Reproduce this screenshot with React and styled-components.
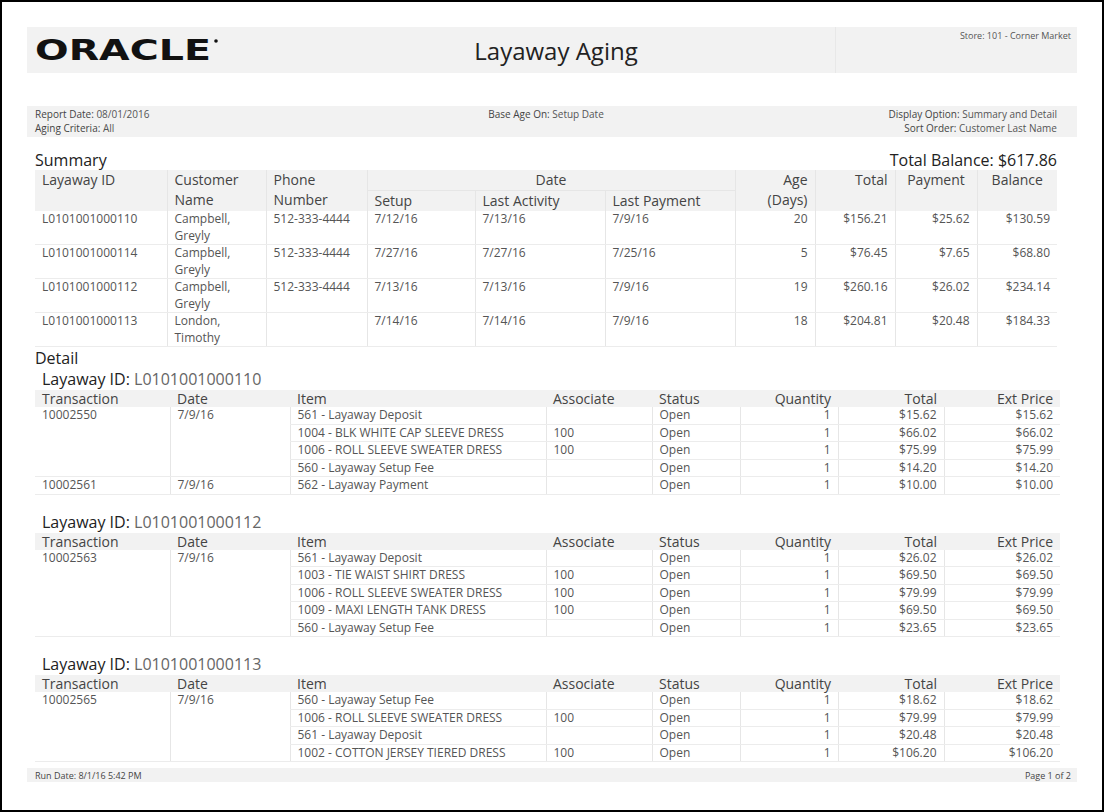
import React from "react";
import styled, { createGlobalStyle } from "styled-components";

const Global = createGlobalStyle`
  html, body { margin: 0; background: #fff; }
  body { font-family: "Open Sans", "Liberation Sans", sans-serif; color: #555; }
`;

const Frame = styled.div`
  width: 1104px;
  height: 812px;
  box-sizing: border-box;
  border: 2px solid #000;
  overflow: hidden;
  padding: 25px 25px 0 25px;
`;

const HeaderBand = styled.div`
  display: grid;
  grid-template-columns: 240px 1fr 242px;
  background: #f2f2f2;
  height: 46px;
`;

const Logo = styled.div`
  display: flex;
  align-items: center;
  padding-left: 8px;
`;

const Title = styled.div`
  display: flex;
  align-items: center;
  justify-content: center;
  font-size: 24px;
  color: #222;
  padding-left: 10px;
`;

const Store = styled.div`
  border-left: 1px solid #e8e8e8;
  font-size: 9px;
  text-align: right;
  padding: 2px 6px 0 0;
`;

const MetaBand = styled.div`
  margin-top: 33px;
  background: #f2f2f2;
  height: 30px;
  display: grid;
  grid-template-columns: 1fr 1fr 1fr;
  font-size: 10px;
  line-height: 14px;
  padding-top: 1px;
`;

const MetaCol = styled.div`
  padding: 0 20px 0 8px;
  text-align: ${(p) => p.$align || "left"};
`;

const Label = styled.span`
  color: #444;
`;

const SectionRow = styled.div`
  display: flex;
  justify-content: space-between;
  align-items: flex-end;
  padding: 0 20px 0 8px;
  margin-top: ${(p) => p.$mt || 0}px;
  font-size: 16px;
  color: #222;
  line-height: 20px;
`;

const Table = styled.table`
  border-collapse: collapse;
  table-layout: fixed;
  margin-left: 8px;
  width: ${(p) => p.$w}px;
  font-size: 12px;
`;

const Th = styled.th`
  background: #f2f2f2;
  font-weight: normal;
  font-size: 14px;
  color: #444;
  text-align: ${(p) => p.$align || "left"};
  vertical-align: top;
  padding: 0 7px;
  line-height: ${(p) => (p.$compact ? "17px" : "20px")};
  border-left: ${(p) => (p.$bl ? "1px solid #e6e6e6" : "none")};
  border-bottom: ${(p) => (p.$bb ? "1px solid #e6e6e6" : "none")};
`;

const Td = styled.td`
  text-align: ${(p) => p.$align || "left"};
  vertical-align: top;
  padding: 0 7px;
  line-height: ${(p) => (p.$tall ? "16.5px" : "16.5px")};
  height: ${(p) => (p.$tall ? "33px" : "16.5px")};
  box-sizing: border-box;
  border-left: ${(p) => (p.$bl ? "1px solid #e6e6e6" : "none")};
  border-bottom: 1px solid #ececec;
  white-space: nowrap;
  overflow: hidden;
`;

const LayawayHead = styled.div`
  font-size: 16px;
  color: #222;
  margin: ${(p) => p.$mt}px 0 2px 15px;
  line-height: 18px;
  span { color: #666; }
`;

const Footer = styled.div`
  margin-top: 6px;
  background: #f2f2f2;
  height: 14px;
  display: flex;
  justify-content: space-between;
  align-items: center;
  font-size: 9px;
  padding: 0 6px 0 8px;
  color: #444;
`;

const summary = [
  ["L0101001000110", "Campbell,", "Greyly", "512-333-4444", "7/12/16", "7/13/16", "7/9/16", "20", "$156.21", "$25.62", "$130.59"],
  ["L0101001000114", "Campbell,", "Greyly", "512-333-4444", "7/27/16", "7/27/16", "7/25/16", "5", "$76.45", "$7.65", "$68.80"],
  ["L0101001000112", "Campbell,", "Greyly", "512-333-4444", "7/13/16", "7/13/16", "7/9/16", "19", "$260.16", "$26.02", "$234.14"],
  ["L0101001000113", "London,", "Timothy", "", "7/14/16", "7/14/16", "7/9/16", "18", "$204.81", "$20.48", "$184.33"],
];

const details = [
  {
    id: "L0101001000110",
    mt: 2,
    tx: [
      ["10002550", "7/9/16", [
        ["561 - Layaway Deposit", "", "$15.62"],
        ["1004 - BLK WHITE CAP SLEEVE DRESS", "100", "$66.02"],
        ["1006 - ROLL SLEEVE SWEATER DRESS", "100", "$75.99"],
        ["560 - Layaway Setup Fee", "", "$14.20"],
      ]],
      ["10002561", "7/9/16", [["562 - Layaway Payment", "", "$10.00"]]],
    ],
  },
  {
    id: "L0101001000112",
    mt: 18,
    tx: [
      ["10002563", "7/9/16", [
        ["561 - Layaway Deposit", "", "$26.02"],
        ["1003 - TIE WAIST SHIRT DRESS", "100", "$69.50"],
        ["1006 - ROLL SLEEVE SWEATER DRESS", "100", "$79.99"],
        ["1009 - MAXI LENGTH TANK DRESS", "100", "$69.50"],
        ["560 - Layaway Setup Fee", "", "$23.65"],
      ]],
    ],
  },
  {
    id: "L0101001000113",
    mt: 18,
    tx: [
      ["10002565", "7/9/16", [
        ["560 - Layaway Setup Fee", "", "$18.62"],
        ["1006 - ROLL SLEEVE SWEATER DRESS", "100", "$79.99"],
        ["561 - Layaway Deposit", "", "$20.48"],
        ["1002 - COTTON JERSEY TIERED DRESS", "100", "$106.20"],
      ]],
    ],
  },
];

function OracleLogo() {
  return (
    <svg width="186" height="28" viewBox="0 0 186 28">
      <text
        x="0"
        y="24"
        fontFamily="'DejaVu Sans', 'Liberation Sans', sans-serif"
        fontSize="29"
        fontWeight="bold"
        fill="#111"
        textLength="176"
        lengthAdjust="spacingAndGlyphs"
      >
        ORACLE
      </text>
      <circle cx="181" cy="5" r="1.8" fill="#111" />
    </svg>
  );
}

function SummaryTable() {
  return (
    <Table $w={1022}>
      <colgroup>
        <col width="132" /><col width="99" /><col width="101" /><col width="108" />
        <col width="130" /><col width="130" /><col width="80" /><col width="80" />
        <col width="82" /><col width="80" />
      </colgroup>
      <thead>
        <tr>
          <Th rowSpan={2}>Layaway ID</Th>
          <Th rowSpan={2} $bl>Customer<br />Name</Th>
          <Th rowSpan={2} $bl>Phone<br />Number</Th>
          <Th colSpan={3} $bl $bb $align="center">Date</Th>
          <Th rowSpan={2} $bl $align="right">Age<br />(Days)</Th>
          <Th rowSpan={2} $bl $align="right">Total</Th>
          <Th rowSpan={2} $bl $align="center">Payment</Th>
          <Th rowSpan={2} $bl $align="center">Balance</Th>
        </tr>
        <tr>
          <Th $bl>Setup</Th>
          <Th $bl>Last Activity</Th>
          <Th $bl>Last Payment</Th>
        </tr>
      </thead>
      <tbody>
        {summary.map((r) => (
          <tr key={r[0]}>
            <Td $tall>{r[0]}</Td>
            <Td $tall $bl>{r[1]}<br />{r[2]}</Td>
            <Td $tall $bl>{r[3]}</Td>
            <Td $tall $bl>{r[4]}</Td>
            <Td $tall $bl>{r[5]}</Td>
            <Td $tall $bl>{r[6]}</Td>
            <Td $tall $bl $align="right">{r[7]}</Td>
            <Td $tall $bl $align="right">{r[8]}</Td>
            <Td $tall $bl $align="right">{r[9]}</Td>
            <Td $tall $bl $align="right">{r[10]}</Td>
          </tr>
        ))}
      </tbody>
    </Table>
  );
}

function DetailTable({ tx }) {
  return (
    <Table $w={1025}>
      <colgroup>
        <col width="135" /><col width="120" /><col width="256" /><col width="106" />
        <col width="88" /><col width="98" /><col width="106" /><col width="116" />
      </colgroup>
      <thead>
        <tr>
          <Th $compact>Transaction</Th>
          <Th $compact>Date</Th>
          <Th $compact>Item</Th>
          <Th $compact>Associate</Th>
          <Th $compact>Status</Th>
          <Th $compact $align="right">Quantity</Th>
          <Th $compact $align="right">Total</Th>
          <Th $compact $align="right">Ext Price</Th>
        </tr>
      </thead>
      <tbody>
        {tx.map(([num, date, items]) =>
          items.map((it, i) => (
            <tr key={num + i}>
              {i === 0 && <Td rowSpan={items.length}>{num}</Td>}
              {i === 0 && <Td rowSpan={items.length} $bl>{date}</Td>}
              <Td $bl>{it[0]}</Td>
              <Td $bl>{it[1]}</Td>
              <Td $bl>Open</Td>
              <Td $bl $align="right">1</Td>
              <Td $bl $align="right">{it[2]}</Td>
              <Td $bl $align="right">{it[2]}</Td>
            </tr>
          ))
        )}
      </tbody>
    </Table>
  );
}

export default function App() {
  return (
    <>
      <Global />
      <Frame>
        <HeaderBand>
          <Logo><OracleLogo /></Logo>
          <Title>Layaway Aging</Title>
          <Store>Store: 101 - Corner Market</Store>
        </HeaderBand>
        <MetaBand>
          <MetaCol>
            <Label>Report Date:</Label> 08/01/2016<br />
            <Label>Aging Criteria:</Label> All
          </MetaCol>
          <MetaCol $align="center">
            <Label>Base Age On:</Label> Setup Date
          </MetaCol>
          <MetaCol $align="right">
            <Label>Display Option:</Label> Summary and Detail<br />
            <Label>Sort Order:</Label> Customer Last Name
          </MetaCol>
        </MetaBand>
        <SectionRow $mt={13}>
          <span>Summary</span>
          <span>Total Balance: $617.86</span>
        </SectionRow>
        <SummaryTable />
        <SectionRow $mt={1}>
          <span>Detail</span>
        </SectionRow>
        {details.map((d) => (
          <div key={d.id}>
            <LayawayHead $mt={d.mt}>
              Layaway ID: <span>{d.id}</span>
            </LayawayHead>
            <DetailTable tx={d.tx} />
          </div>
        ))}
        <Footer>
          <span>Run Date: 8/1/16 5:42 PM</span>
          <span>Page 1 of 2</span>
        </Footer>
      </Frame>
    </>
  );
}
